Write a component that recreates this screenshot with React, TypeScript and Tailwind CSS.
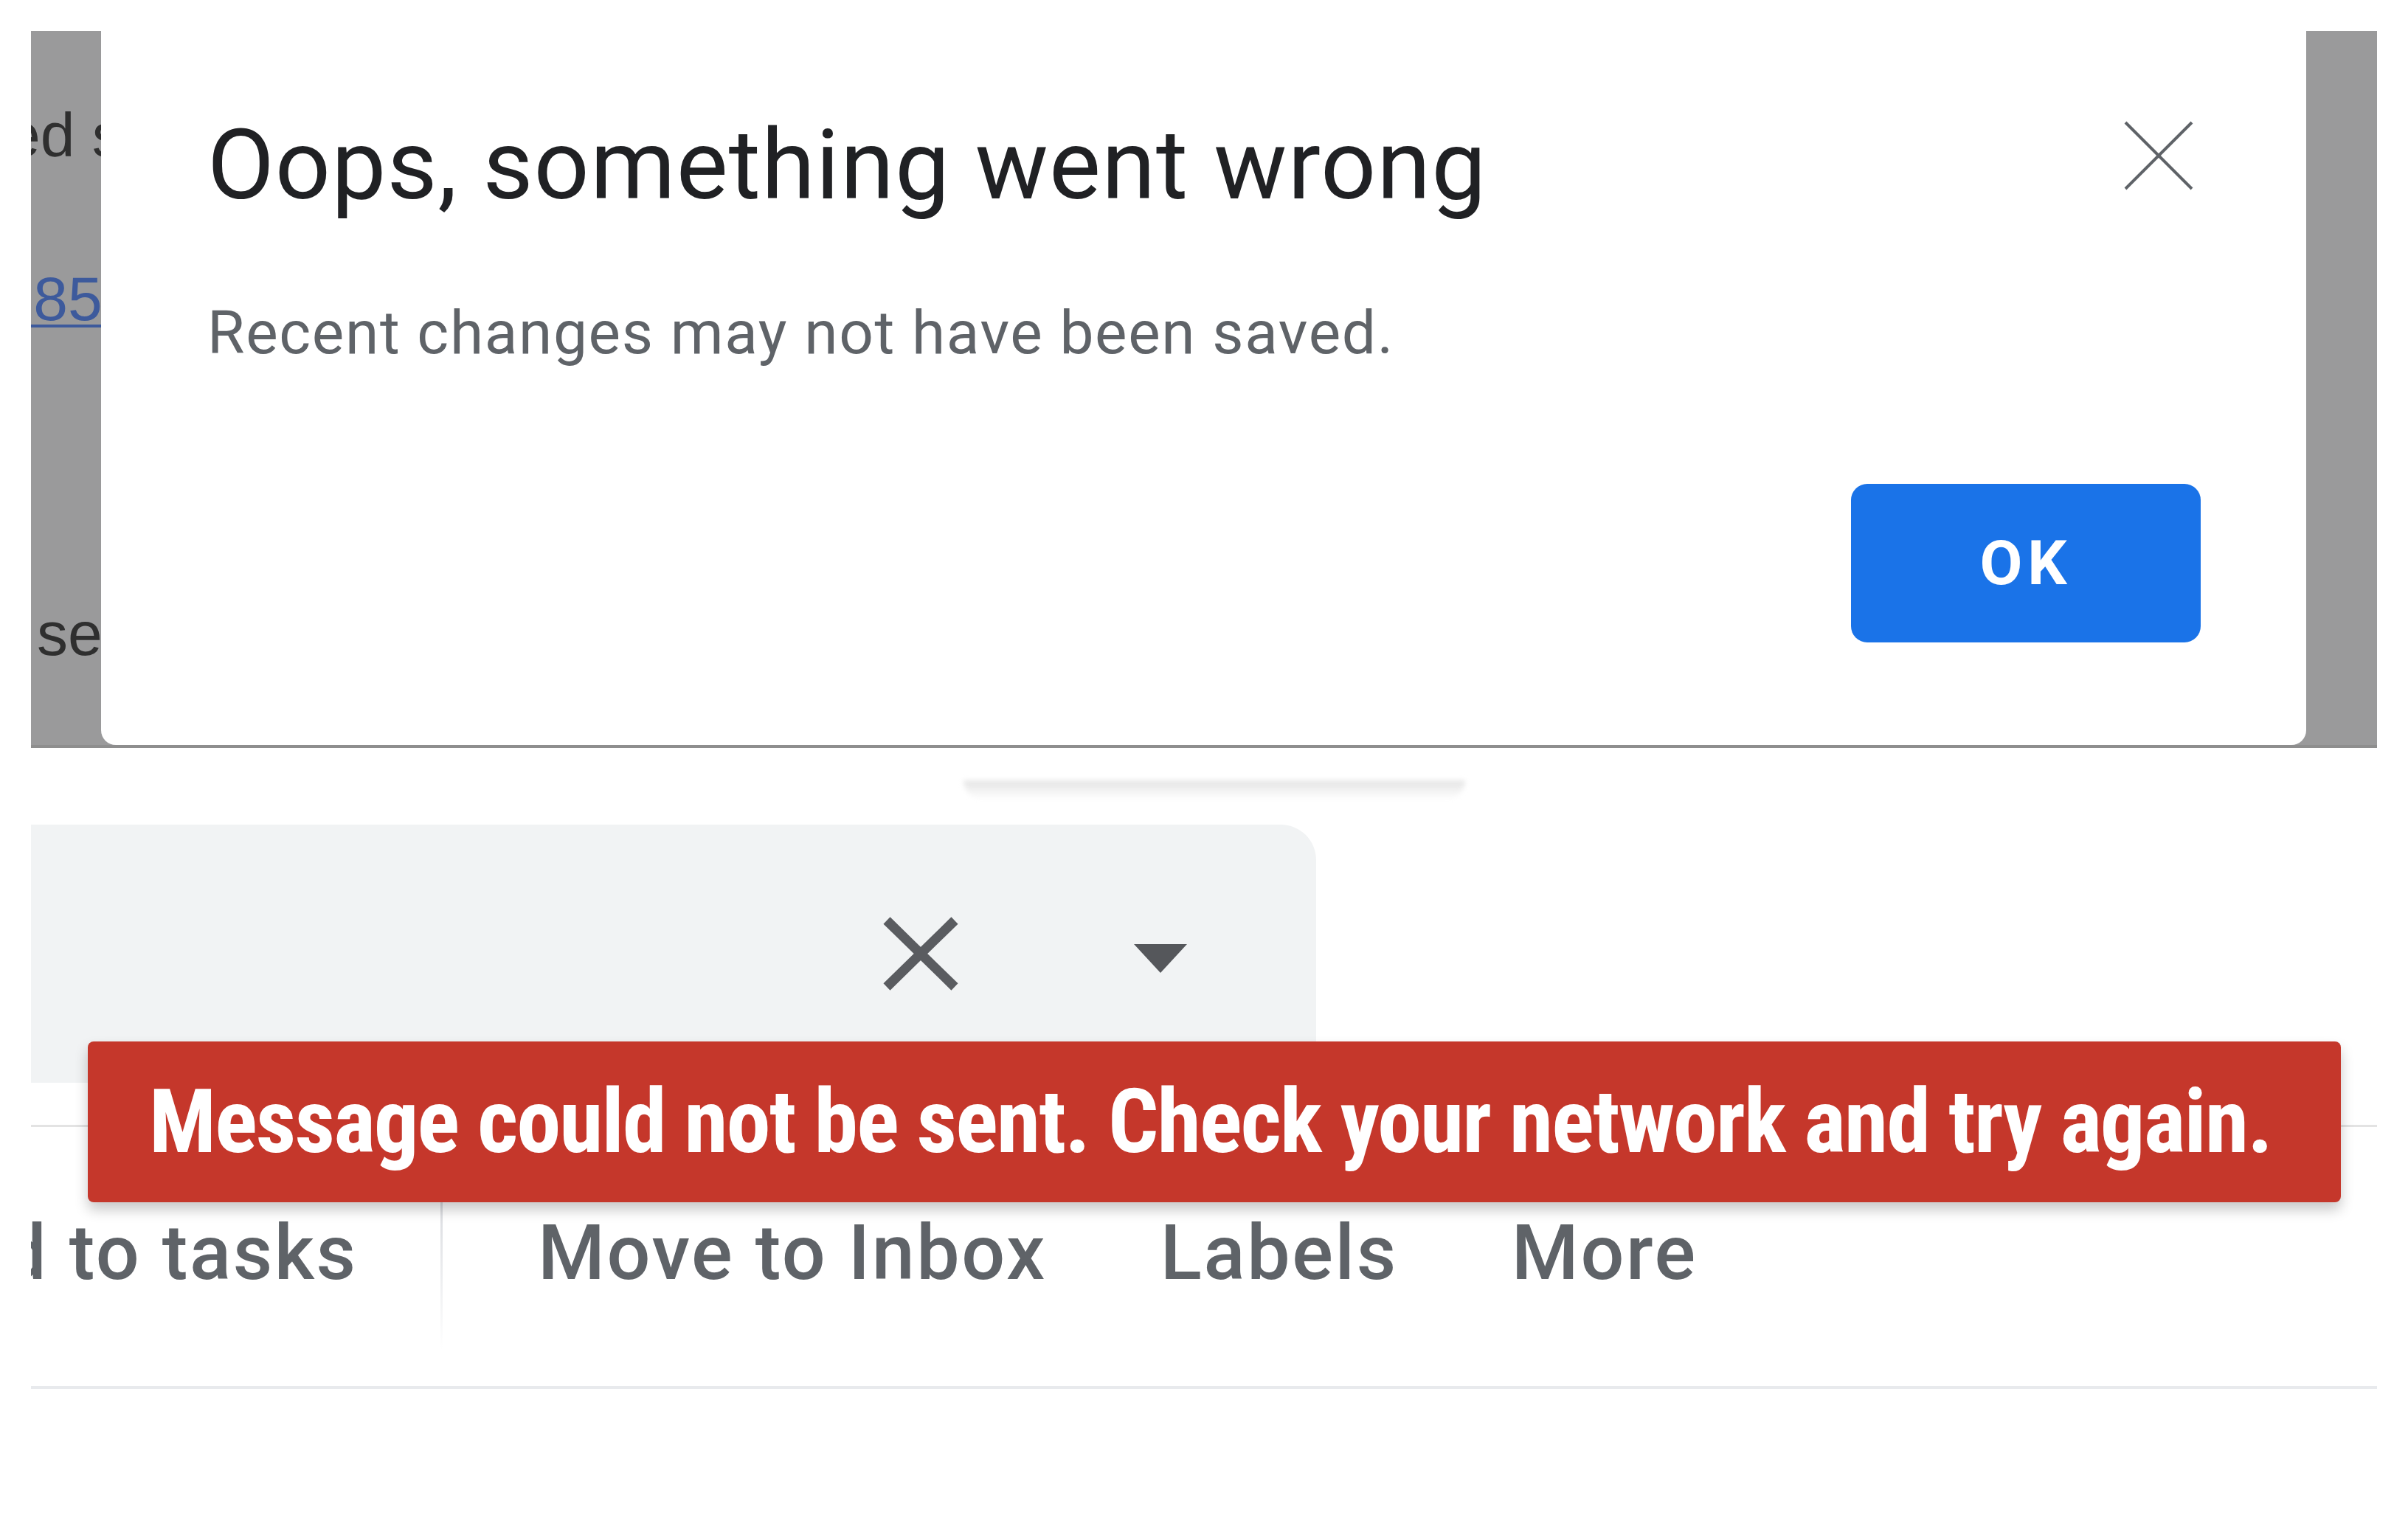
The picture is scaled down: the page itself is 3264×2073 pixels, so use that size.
const CloseThin = () => (
  <svg width="94" height="94" viewBox="0 0 94 94" fill="none" stroke="#5f6368" strokeWidth="4">
    <path d="M2 2L92 92M92 2L2 92" />
  </svg>
);

const CloseBold = () => (
  <svg width="104" height="102" viewBox="0 0 104 102" fill="none" stroke="#5a5c60" strokeWidth="13">
    <path d="M6 6L98 96M98 6L6 96" />
  </svg>
);

const Caret = () => (
  <svg width="72" height="40" viewBox="0 0 72 40" fill="#55575b">
    <path d="M0 0H72L36 39Z" />
  </svg>
);

const App = () => {
  return (
    <div className="relative w-[3264px] h-[2073px] overflow-hidden bg-white px-[42px] pt-[42px] font-['Roboto',sans-serif]">
      {/* Dialog over dimmed page */}
      <div className="flex h-[972px] bg-[#9a9a9b] border-b-[4px] border-[#8e8e8e]">
        <div className="w-[95px] overflow-hidden pt-[99px] font-['Liberation_Sans',sans-serif] text-[84px] leading-[84px] text-[#2f2f2f]">
          <div className="whitespace-nowrap -ml-[34px]">ed s</div>
          <div className="whitespace-nowrap -ml-[20px] mt-[138px] text-[#3d5a9c] underline underline-offset-[6px] decoration-[4px]">.85</div>
          <div className="whitespace-nowrap ml-[8px] mt-[370px]">se</div>
        </div>

        <div className="flex-1 flex flex-col bg-white rounded-b-[20px] pl-[144px] pr-[143px] pt-[104px]">
          <div className="flex items-start justify-between">
            <h1 className="text-[132px] leading-[156px] font-normal tracking-[0.008em] text-[#202124] whitespace-nowrap">
              Oops, something went wrong
            </h1>
            <button className="mt-[18px] mr-[10px]">
              <CloseThin />
            </button>
          </div>
          <p className="mt-[101px] text-[82px] leading-[96px] tracking-[0.02em] text-[#5f6368] whitespace-nowrap">
            Recent changes may not have been saved.
          </p>
          <button className="self-end mt-[157px] w-[474px] h-[215px] rounded-[22px] bg-[#1a73e8] text-white text-[84px] font-bold tracking-[0.08em] flex items-center justify-center">
            OK
          </button>
        </div>

        <div className="w-[96px]" />
      </div>

      {/* Page underneath */}
      <div className="mt-[44px] ml-[1264px] w-[680px] h-[26px] rounded-b-[40px] bg-gradient-to-b from-[#e4e4e4] to-white/0 blur-[3px]" />

      <div className="mt-[34px] w-[1742px] h-[350px] bg-[#f1f3f4] rounded-tr-[48px] flex items-center pl-[1154px]">
        <CloseBold />
        <div className="ml-[237px] mt-[14px]">
          <Caret />
        </div>
      </div>

      <div className="mt-[57px] h-[3px] bg-[#e3e3e3]" />

      <div className="flex items-start h-[351px] pt-[101px] text-[104px] leading-[125px] font-medium text-[#5f6368] tracking-[0.025em]">
        <div className="w-[555px] overflow-hidden mt-[7px]">
          <div className="whitespace-nowrap -ml-[38px]">d to tasks</div>
        </div>
        <div className="w-[3px] h-[200px] bg-gradient-to-b from-[#dadce0] to-white" />
        <span className="ml-[129px] mt-[7px] whitespace-nowrap">Move to Inbox</span>
        <span className="ml-[154px] mt-[7px] whitespace-nowrap">Labels</span>
        <span className="ml-[154px] mt-[7px] whitespace-nowrap">More</span>
      </div>

      <div className="h-[4px] bg-[#e8eaed]" />

      {/* Error toast */}
      <div className="absolute left-[119px] top-[1412px] w-[3054px] h-[218px] rounded-[8px] bg-[#c5372b] shadow-[0_10px_18px_rgba(0,0,0,0.22)] flex items-center pl-[83px]">
        <span className="whitespace-nowrap text-white font-bold text-[120px] tracking-[-0.015em] font-stretch-condensed font-['Roboto_Condensed','Roboto',sans-serif]">
          Message could not be sent. Check your network and try again.
        </span>
      </div>
    </div>
  );
};

export default App;
